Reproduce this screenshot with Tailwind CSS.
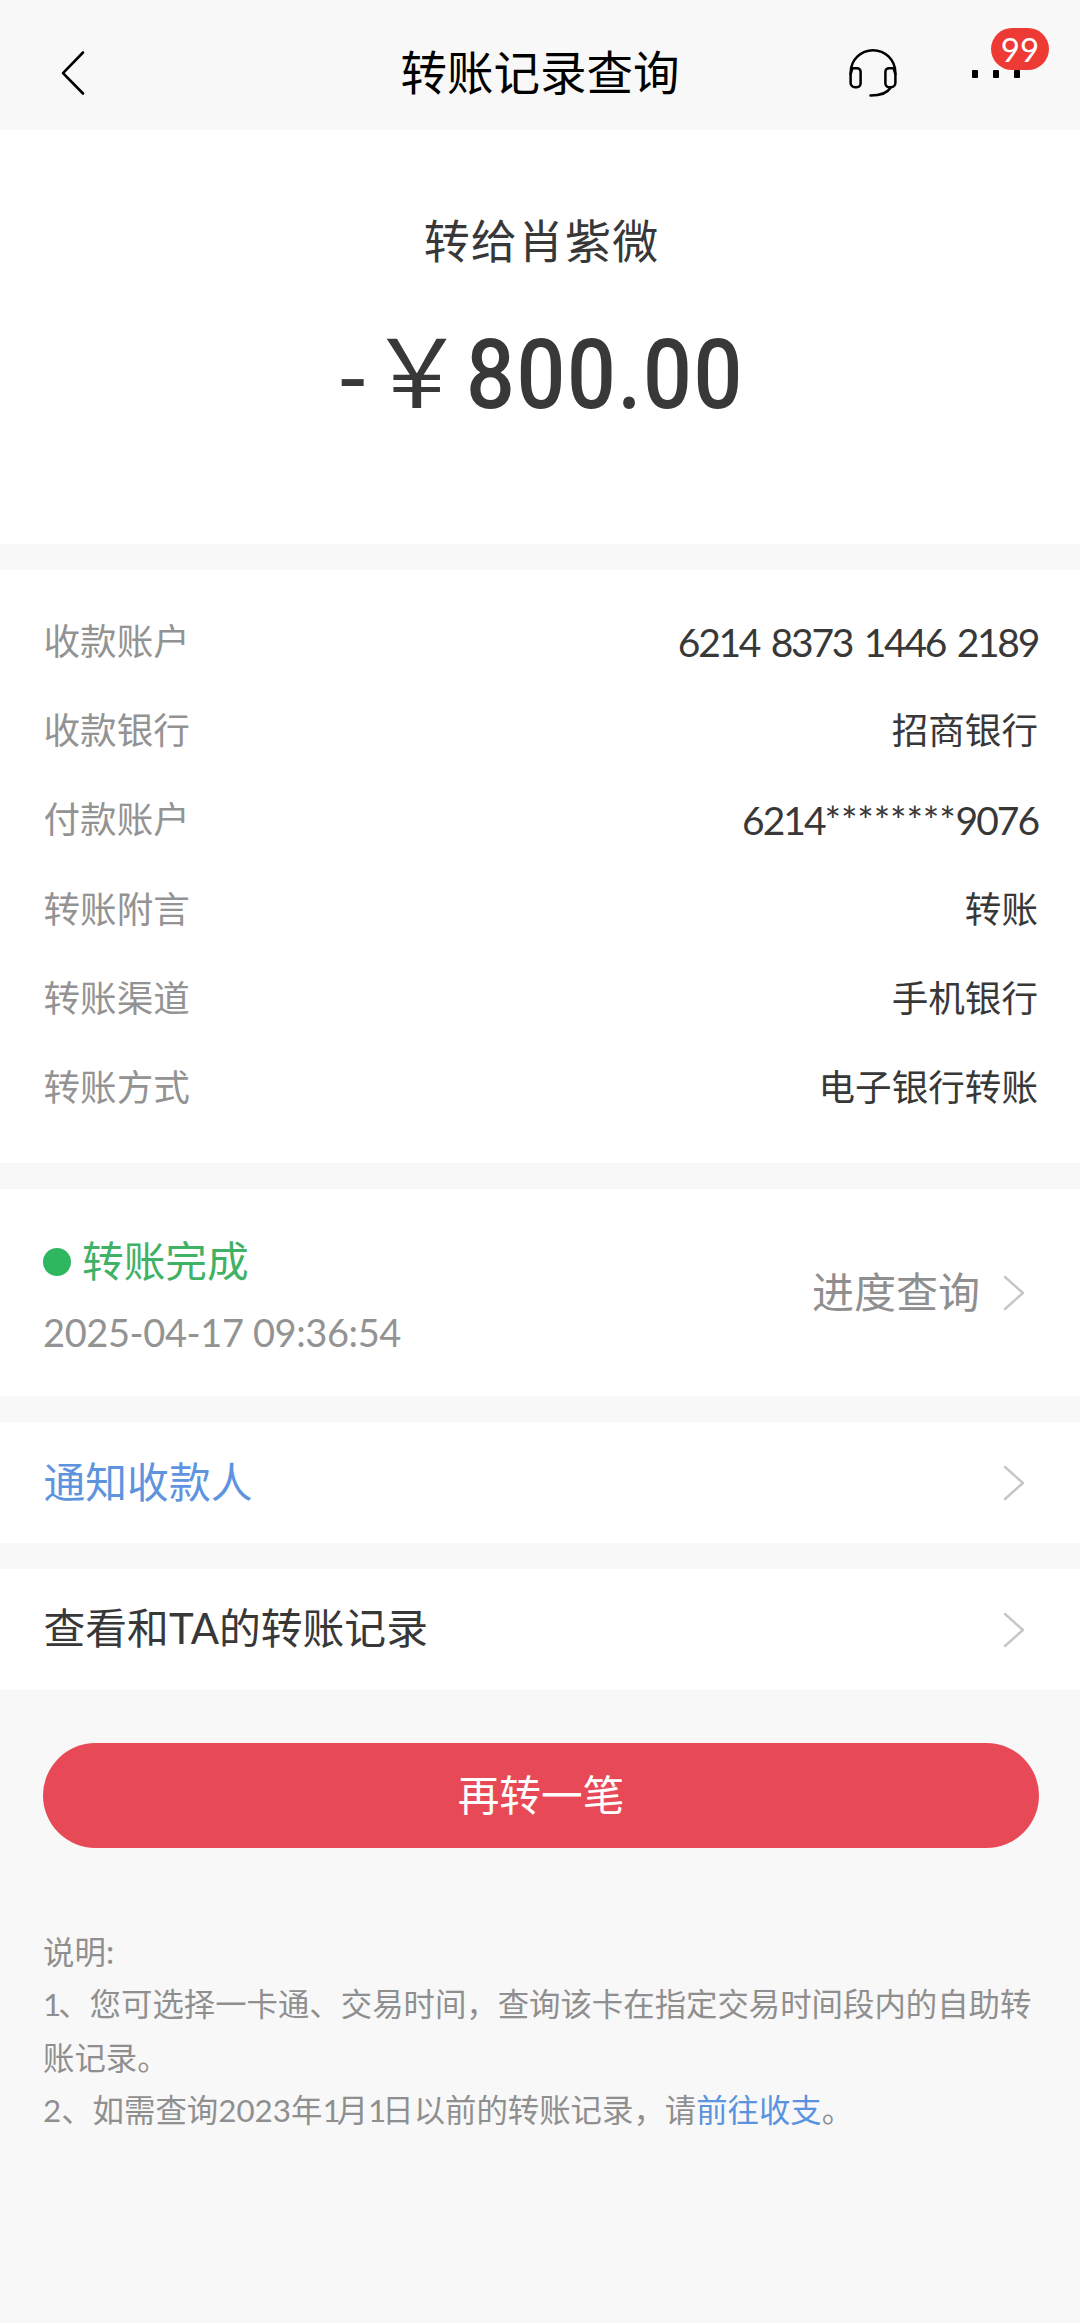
<!DOCTYPE html>
<html lang="zh-CN">
<head>
<meta charset="utf-8">
<title>转账记录查询</title>
<script src="https://cdn.jsdelivr.net/npm/@tailwindcss/browser@4"></script>
</head>
<body class="bg-[#f8f8f8] font-['Noto_Sans_CJK_SC',sans-serif] text-[#383838]">
<div class="w-[1080px] h-[2323px] flex flex-col overflow-hidden">

  <header class="relative h-[130px] shrink-0 flex items-center justify-center text-black">
    <svg class="absolute left-[60px] top-[49px]" width="27" height="48" viewBox="0 0 27 48" fill="none" stroke="#000" stroke-width="2.6" stroke-linecap="round" stroke-linejoin="round"><path d="M23 3.5 3 24.2 23 44.5"/></svg>
    <h1 class="text-[46.500px] leading-[60px] mt-[10px]">转账记录查询</h1>
    <svg class="absolute left-[847px] top-[47px]" width="52" height="52" viewBox="0 0 52 52" fill="none" stroke="#000" stroke-width="2.5" stroke-linecap="round" stroke-linejoin="round">
      <path d="M3.7 27v-1.500a22.300 22.300 0 0 1 44.600 0V27"/>
      <path d="M5.500 21.200H10a3.600 3.600 0 0 1 3.600 3.600v11.800A3.600 3.600 0 0 1 10 40.200H8a4.400 4.400 0 0 1-4.400-4.400V27z"/>
      <path d="M46.500 21.200H42a3.600 3.600 0 0 0-3.600 3.600v11.800a3.600 3.600 0 0 0 3.600 3.600h2a4.400 4.400 0 0 0 4.400-4.400V27z"/>
      <path d="M43.300 41C40 46.500 34 48.500 23.500 48.500"/>
    </svg>
    <div class="absolute left-[972px] top-[70px] flex gap-[15.500px]">
      <i class="w-[5.700px] h-[8.300px] rounded-[1px] bg-black"></i><i class="w-[5.700px] h-[8.300px] rounded-[1px] bg-black"></i><i class="w-[5.700px] h-[8.300px] rounded-[1px] bg-black"></i>
    </div>
    <span class="absolute left-[991px] top-[28px] w-[58px] h-[42px] rounded-full bg-[#ee3a34] text-white text-center font-[Lato] text-[33px] leading-[42px]">99</span>
  </header>

  <section class="h-[414px] shrink-0 bg-white flex flex-col items-center">
    <p class="mt-[76px] pl-[3px] text-[46px] tracking-[1.1px] leading-[64px]">转给肖紫微</p>
    <p class="mt-[41px] w-[400px] h-[128px] leading-[128px] text-[95.500px] flex whitespace-nowrap">
      <span class="mt-[5px] w-[35px] text-[92px] font-[Roboto]">-</span>
      <span class="ml-[9px] w-[72px] flex justify-center font-[Roboto]"><span class="w-[96px] shrink-0 ml-[14px]">￥</span></span>
      <span class="ml-[20px] font-[Roboto] font-medium tracking-[1.800px] origin-left scale-x-90">800.00</span>
    </p>
  </section>

  <section class="mt-[26px] h-[593px] shrink-0 bg-white pl-[43.500px] pr-[42px] pt-[25px] text-[36.6px] leading-[89.200px]">
    <dl class="flex flex-col">
      <div class="flex justify-between h-[89.200px]"><dt class="text-[#939393]">收款账户</dt><dd class="mt-[3px] font-[Lato] text-[39px] tracking-[-2.300px] [word-spacing:4px]">6214 8373 1446 2189</dd></div>
      <div class="flex justify-between h-[89.200px]"><dt class="text-[#939393]">收款银行</dt><dd>招商银行</dd></div>
      <div class="flex justify-between h-[89.200px]"><dt class="text-[#939393]">付款账户</dt><dd class="mt-[3px] font-[Lato] text-[39px] tracking-[-2px]">6214<span class="tracking-[-0.200px]">********</span>9076</dd></div>
      <div class="flex justify-between h-[89.200px]"><dt class="text-[#939393]">转账附言</dt><dd>转账</dd></div>
      <div class="flex justify-between h-[89.200px]"><dt class="text-[#939393]">转账渠道</dt><dd>手机银行</dd></div>
      <div class="flex justify-between h-[89.200px]"><dt class="text-[#939393]">转账方式</dt><dd>电子银行转账</dd></div>
    </dl>
  </section>

  <section class="mt-[26px] h-[207px] shrink-0 bg-white pl-[43px] pr-[55px] flex items-center justify-between">
    <div class="flex flex-col">
      <div class="flex items-center gap-[11px] h-[64px]">
        <i class="mt-[9px] w-[28px] h-[28px] rounded-full bg-[#2fb75f]"></i>
        <span class="mt-[3px] text-[41.700px] leading-[64px] text-[#3fb265]">转账完成</span>
      </div>
      <time class="mt-[8px] -mb-[2px] h-[64px] leading-[68px] text-[38px] tracking-[-0.400px] font-[Lato] text-[#939393]">2025-04-17 09:36:54</time>
    </div>
    <div class="flex items-center text-[#8f8f8f]">
      <span class="-mt-[6px] text-[42px] leading-[60px]">进度查询</span>
      <svg class="ml-[22px]" width="23" height="38" viewBox="0 0 23 38" fill="none" stroke="#c6c6c6" stroke-width="2.4" stroke-linecap="round" stroke-linejoin="round"><path d="M3 3 21 19 3 35"/></svg>
    </div>
  </section>

  <section class="mt-[26px] h-[121px] shrink-0 bg-white pl-[43.500px] pr-[55px] flex items-center justify-between">
    <span class="-mt-[5px] text-[41.800px] leading-[60px] text-[#5e94df]">通知收款人</span>
    <svg width="23" height="38" viewBox="0 0 23 38" fill="none" stroke="#c6c6c6" stroke-width="2.4" stroke-linecap="round" stroke-linejoin="round"><path d="M3 3 21 19 3 35"/></svg>
  </section>

  <section class="mt-[26px] h-[121px] shrink-0 bg-white pl-[43.500px] pr-[55px] flex items-center justify-between">
    <span class="-mt-[5px] text-[41.800px] leading-[60px]">查看和<span class="font-[Lato]">TA</span>的转账记录</span>
    <svg width="23" height="38" viewBox="0 0 23 38" fill="none" stroke="#c6c6c6" stroke-width="2.4" stroke-linecap="round" stroke-linejoin="round"><path d="M3 3 21 19 3 35"/></svg>
  </section>

  <button class="mt-[53px] ml-[43px] w-[996px] h-[105px] pb-[6px] shrink-0 rounded-full bg-[#e74a56] text-white text-[41.700px] leading-[60px]">再转一笔</button>

  <div class="mt-[77px] mx-[43px] text-[31.400px] leading-[52.300px] text-[#8f8f8f] whitespace-nowrap">
    <p>说明:</p>
    <p><span class="font-[Lato] tracking-[-3px]">1</span>、您可选择一卡通、交易时间，查询该卡在指定交易时间段内的自助转<br>账记录。</p>
    <p><span class="font-[Lato]">2</span>、如需查询<span class="font-[Lato]">2023</span>年<span class="font-[Lato] tracking-[-4px]">1</span>月<span class="font-[Lato] tracking-[-4px]">1</span>日以前的转账记录，请<a class="text-[#5a93df]">前往收支</a>。</p>
  </div>
</div>
</body>
</html>
